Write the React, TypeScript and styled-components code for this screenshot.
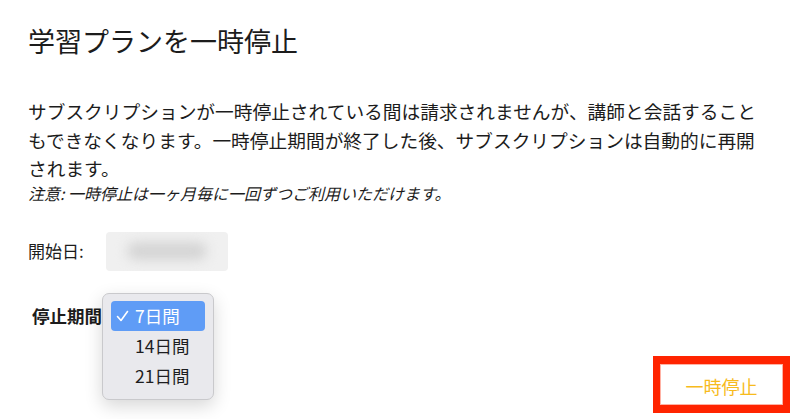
import React from 'react';
import styled, { createGlobalStyle } from 'styled-components';

const GlobalStyle = createGlobalStyle`
  html, body {
    margin: 0;
    padding: 0;
    background: #ffffff;
  }
  body {
    font-family: "Noto Sans CJK JP", "Noto Sans", "Liberation Sans", sans-serif;
    color: #1c1c1c;
  }
`;

const Page = styled.div`
  width: 800px;
  height: 419px;
  box-sizing: border-box;
  padding: 23px 10px 0 28px;
  overflow: hidden;
`;

const Title = styled.h1`
  margin: 0;
  font-size: 27px;
  line-height: 36px;
  font-weight: 400;
`;

const Description = styled.p`
  margin: 38px 0 0;
  max-width: 742px;
  font-size: 18.72px;
  line-height: 28.5px;
`;

const Note = styled.p`
  margin: 0;
  font-size: 16px;
  line-height: 20px;
  font-style: italic;
`;

const FieldRow = styled.div<{ $gap: number; $top: number }>`
  display: flex;
  align-items: center;
  gap: ${(p) => p.$gap}px;
  margin-top: ${(p) => p.$top}px;
`;

const FieldLabel = styled.span<{ $bold?: boolean }>`
  font-size: ${(p) => (p.$bold ? '17.5px' : '17px')};
  font-weight: ${(p) => (p.$bold ? 700 : 400)};
  line-height: 30px;
  margin-left: ${(p) => (p.$bold ? '4px' : '0')};
  white-space: nowrap;
`;

const DateBox = styled.div`
  width: 122px;
  height: 39px;
  border-radius: 4px;
  background: #f0f0f0;
  display: flex;
  align-items: center;
  justify-content: center;
  overflow: hidden;
`;

const BlurredValue = styled.div`
  width: 80px;
  height: 18px;
  border-radius: 9px;
  background: #d4d4d4;
  filter: blur(6px);
`;

const SelectAnchor = styled.div`
  position: relative;
  width: 112px;
  height: 30px;
`;

const Menu = styled.ul`
  position: absolute;
  top: -8px;
  left: 0;
  width: 112px;
  box-sizing: border-box;
  margin: 0;
  padding: 7px 8px 8px;
  list-style: none;
  background: #e9e9ed;
  border: 1px solid #c9c9cc;
  border-radius: 7px;
  box-shadow: 0 6px 18px rgba(0, 0, 0, 0.16);
`;

const MenuItem = styled.li<{ $selected?: boolean }>`
  position: relative;
  height: 30px;
  border-radius: 4px;
  display: flex;
  align-items: center;
  padding-left: 24px;
  font-size: 17.5px;
  color: ${(p) => (p.$selected ? '#ffffff' : '#1d1d1f')};
  background: ${(p) => (p.$selected ? '#5f9cf6' : 'transparent')};
`;

const Check = styled.svg`
  position: absolute;
  left: 5px;
  top: 9px;
`;

const Actions = styled.div`
  display: flex;
  justify-content: flex-end;
  margin-top: 25px;
`;

const PauseButton = styled.button`
  width: 137px;
  height: 57px;
  box-sizing: border-box;
  border-style: solid;
  border-color: #ff2400;
  border-width: 8px 7px;
  background: #ffffff;
  box-shadow: inset 0 0 0 1px #ffb2a4;
  color: #f7bb1c;
  font-family: inherit;
  font-size: 18px;
  padding: 4px 0 0;
  cursor: pointer;
`;

const options = ['7日間', '14日間', '21日間'];

const App: React.FC = () => {
  return (
    <Page>
      <GlobalStyle />
      <Title>学習プランを一時停止</Title>
      <Description>
        サブスクリプションが一時停止されている間は請求されませんが、講師と会話することもできなくなります。一時停止期間が終了した後、サブスクリプションは自動的に再開されます。
      </Description>
      <Note>注意: 一時停止は一ヶ月毎に一回ずつご利用いただけます。</Note>
      <FieldRow $gap={22} $top={29}>
        <FieldLabel>開始日:</FieldLabel>
        <DateBox>
          <BlurredValue />
        </DateBox>
      </FieldRow>
      <FieldRow $gap={0} $top={30}>
        <FieldLabel $bold>停止期間</FieldLabel>
        <SelectAnchor>
          <Menu>
            {options.map((o, i) => (
              <MenuItem key={o} $selected={i === 0}>
                {i === 0 && (
                  <Check width="13" height="12" viewBox="0 0 13 12">
                    <path d="M1.5 6.5 L5 10.5 L11.5 1.5" fill="none" stroke="#fff" strokeWidth="1.6" strokeLinecap="round" strokeLinejoin="round" />
                  </Check>
                )}
                {o}
              </MenuItem>
            ))}
          </Menu>
        </SelectAnchor>
      </FieldRow>
      <Actions>
        <PauseButton>一時停止</PauseButton>
      </Actions>
    </Page>
  );
};

export default App;
